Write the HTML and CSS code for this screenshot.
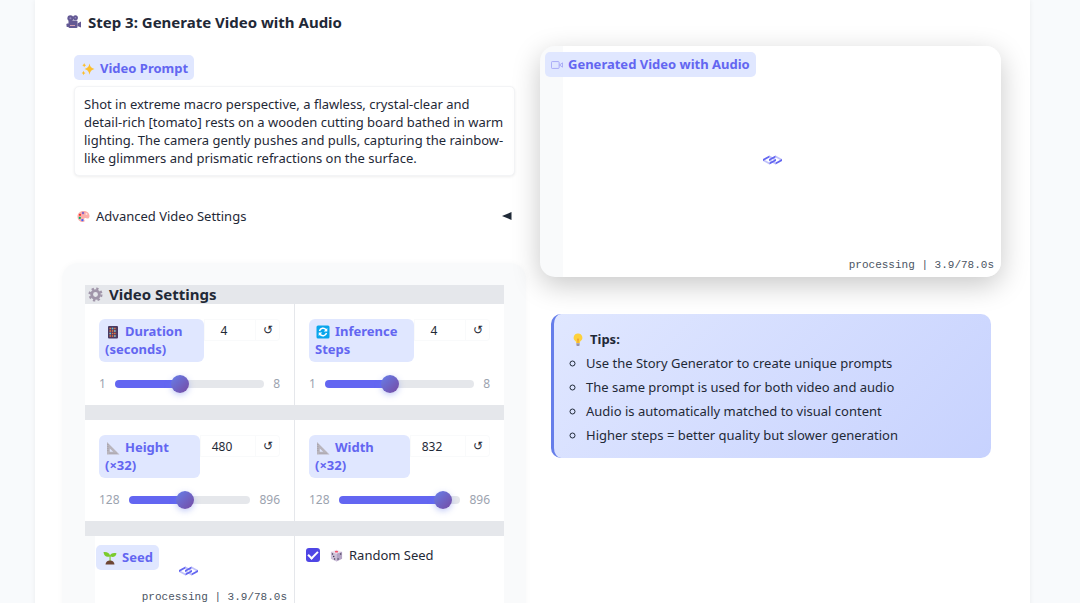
FILE: index.html
```html
<!DOCTYPE html>
<html lang="en">
<head>
<meta charset="utf-8">
<title>Generate Video with Audio</title>
<link rel="stylesheet" href="styles.css">
</head>
<body>
<svg class="defs" aria-hidden="true">
  <symbol id="loader" viewBox="0 0 750 362">
    <g id="loader-half">
      <path opacity=".4" d="M256 1L510 140V221L256 82Z"/>
      <path d="M510 140L255 280V361L510 222Z"/>
      <path opacity=".4" d="M0 140L255 280V361L0 222Z"/>
      <path d="M256 0L0 140V222L256 82Z"/>
    </g>
    <use href="#loader-half" x="240"/>
  </symbol>
  <symbol id="ruler" viewBox="0 0 14 14">
    <path fill="#b9b5bd" fill-rule="evenodd" d="M1 1L13.5 13.5H1ZM3.8 7.4V10.8H7.2Z"/>
    <path stroke="#99939e" stroke-width=".7" d="M1.4 3.5h1M1.4 5.5h1M1.4 7.5h1M1.4 9.5h1M4 12.8v-1M6 12.8v-1M8 12.8v-1M10 12.8v-1"/>
  </symbol>
</svg>
<main class="page">
  <div class="card">
    <h2 class="title">
      <svg class="icon-title" viewBox="0 0 16 14"><g fill="#635994"><circle cx="4.4" cy="3.3" r="3"/><circle cx="9.4" cy="2.8" r="2.5"/><rect x="2.5" y="5.5" width="9" height="7.5" rx="1"/><path d="M11.5 8.5L15 6.5V12.5L11.5 11Z"/><rect x="0.5" y="8.5" width="3" height="3.5" rx=".8"/></g><circle cx="4.4" cy="3.3" r="1" fill="#998ec0"/><circle cx="9.4" cy="2.8" r=".8" fill="#998ec0"/><path d="M4 10.5h5" stroke="#d3a0b2" stroke-width="1"/></svg>
      Step 3: Generate Video with Audio
    </h2>
    <div class="columns">
      <section class="left">
        <div class="prompt">
          <label class="chip" for="prompt"><svg class="icon" viewBox="0 0 14 14"><path fill="#fcbf2d" d="M8.5 1.5Q9.3 6.2 13.5 7Q9.3 7.8 8.5 12.8Q7.7 7.8 3.5 7Q7.7 6.2 8.5 1.5ZM3.2 1Q3.5 2.9 5.1 3.2Q3.5 3.5 3.2 5.4Q2.9 3.5 1.3 3.2Q2.9 2.9 3.2 1ZM2.6 8.8Q2.9 10.6 4.6 11Q2.9 11.4 2.6 13.2Q2.3 11.4.6 11Q2.3 10.6 2.6 8.8Z"/></svg>Video Prompt</label>
          <textarea id="prompt" class="prompt-text" rows="4">Shot in extreme macro perspective, a flawless, crystal-clear and detail-rich [tomato] rests on a wooden cutting board bathed in warm lighting. The camera gently pushes and pulls, capturing the rainbow-like glimmers and prismatic refractions on the surface.</textarea>
        </div>
        <button class="accordion" type="button">
          <svg class="icon-small" viewBox="0 0 14 14"><path fill="#fbaeaa" d="M7 1C3 1 .5 3.700 .5 7S3 13 6.500 13C8.500 13 8.500 11.500 7.800 10.500C7 9 8.500 8 10 8.800C12 10 13.500 8.800 13.500 6.500C13.500 3 10.500 1 7 1Z"/><circle cx="6.500" cy="3.300" r="1.300" fill="#8d65c5"/><circle cx="3.200" cy="5.200" r="1.200" fill="#f8312f"/><circle cx="3" cy="8.500" r="1.200" fill="#00b06a"/><circle cx="5.800" cy="11" r="1.200" fill="#3f5fff"/><circle cx="10.200" cy="4.300" r="1" fill="#ffe0dc"/></svg>
          <span>Advanced Video Settings</span>
          <svg class="arrow" viewBox="0 0 10 8"><path d="M0 4L9.500 0V8Z" fill="#1f2937"/></svg>
        </button>
        <div class="settings">
          <div class="grid">
            <h3 class="grid-title">
              <svg class="icon-gear" viewBox="0 0 16 16"><circle cx="8" cy="8" r="6.300" fill="none" stroke="#a095a9" stroke-width="2.400" stroke-dasharray="2.475 2.475"/><circle cx="8" cy="8" r="4.100" fill="none" stroke="#a095a9" stroke-width="3"/></svg>
              Video Settings
            </h3>
            <div class="cell">
              <div class="head">
                <label class="chip wrap" for="duration"><svg class="icon" viewBox="0 0 14 14"><rect x="2" y="1" width="10" height="12.500" rx="1" fill="#4a3a63"/><path d="M3.500 3.500h7M3.500 6h7M3.500 8.500h7M3.500 11h7" stroke="#f07b3e" stroke-width="1.500" stroke-dasharray="1.500 .8"/><path d="M5.800 3.500h1.500M8.100 6h1.500M3.500 8.500h1.500M8.100 11h1.500" stroke="#55c7e8" stroke-width="1.500"/></svg>Duration (seconds)</label>
                <input class="number" value="4" aria-label="Duration value"><button class="reset" type="button" aria-label="Reset duration">↺</button>
              </div>
              <div class="slide"><span>1</span><input id="duration" type="range" min="1" max="8" value="4" style="--fill:43%"><span>8</span></div>
            </div>
            <div class="cell">
              <div class="head">
                <label class="chip wrap" for="steps"><svg class="icon" viewBox="0 0 14 14"><rect x=".5" y=".5" width="13" height="13" rx="1.500" fill="#08a5ec"/><path d="M3.500 6A3.700 3.700 0 0 1 10 4.700M10.500 8A3.700 3.700 0 0 1 4 9.300" fill="none" stroke="#fff" stroke-width="1.500"/><path d="M11.300 3V6.600H7.700ZM2.700 11V7.400H6.300Z" fill="#fff"/></svg>Inference Steps</label>
                <input class="number" value="4" aria-label="Inference steps value"><button class="reset" type="button" aria-label="Reset steps">↺</button>
              </div>
              <div class="slide"><span>1</span><input id="steps" type="range" min="1" max="8" value="4" style="--fill:43%"><span>8</span></div>
            </div>
            <div class="cell spaced">
              <div class="head">
                <label class="chip wrap narrow" for="height"><svg class="icon"><use href="#ruler"/></svg>Height (×32)</label>
                <input class="number" value="480" aria-label="Height value"><button class="reset" type="button" aria-label="Reset height">↺</button>
              </div>
              <div class="slide"><span>128</span><input id="height" type="range" min="128" max="896" step="32" value="480" style="--fill:46%"><span>896</span></div>
            </div>
            <div class="cell spaced">
              <div class="head">
                <label class="chip wrap narrow" for="width"><svg class="icon"><use href="#ruler"/></svg>Width (×32)</label>
                <input class="number" value="832" aria-label="Width value"><button class="reset" type="button" aria-label="Reset width">↺</button>
              </div>
              <div class="slide"><span>128</span><input id="width" type="range" min="128" max="896" step="32" value="832" style="--fill:90%"><span>896</span></div>
            </div>
            <div class="cell seed spaced">
              <span class="chip"><svg class="icon" viewBox="0 0 14 14"><path fill="#7bcb2d" d="M6.500 5.500C3 6.500 .8 4.500 .5 1C4 .5 6.500 2 7 4.500C7.500 2.500 10 1.500 13.500 2.200C13 5.500 10.500 6.800 7.600 5.600L7.700 10H6.500Z"/><path fill="#6d4534" d="M2.500 13.500Q3 9.500 7 9.500T11.500 13.500Z"/></svg>Seed</span>
              <svg class="loader"><use href="#loader"/></svg>
              <span class="status">processing | 3.9/78.0s</span>
            </div>
            <div class="cell random spaced">
              <label class="check"><input type="checkbox" checked><svg class="icon-small" viewBox="0 0 14 14"><path fill="#eee5f1" d="M7 .8L13 3V10.500L7 13.500L1 10.500V3Z"/><path fill="#cdc1d8" d="M1 3L7 5.200V13.500L1 10.500Z"/><path fill="#b4a4c4" d="M13 3L7 5.200V13.500L13 10.500Z"/><ellipse cx="7" cy="2.900" rx="1.800" ry=".9" fill="#f3506a"/><g fill="#403852"><circle cx="2.700" cy="5.500" r=".8"/><circle cx="5" cy="10.700" r=".8"/><circle cx="4" cy="8" r=".8"/><circle cx="11.500" cy="5.500" r=".8"/><circle cx="8.700" cy="10.700" r=".8"/></g></svg><span>Random Seed</span></label>
            </div>
          </div>
        </div>
      </section>
      <section class="right">
        <div class="video">
          <div class="video-body">
            <svg class="loader"><use href="#loader"/></svg>
            <span class="status">processing | 3.9/78.0s</span>
          </div>
          <span class="chip video-chip"><svg class="icon" viewBox="0 0 14 14"><g fill="none" stroke="#a0a1f6" stroke-width="1"><rect x=".5" y="3" width="9" height="8" rx="1"/><path d="M10 7L13.500 4.500V9.500Z"/></g></svg>Generated Video with Audio</span>
        </div>
        <aside class="tips">
          <strong><svg class="icon" viewBox="0 0 14 14"><path fill="#fdd13c" d="M7 .5A4.200 4.200 0 0 1 9.300 8.300L8.800 10H5.200L4.700 8.300A4.200 4.200 0 0 1 7 .5Z"/><path fill="#f3a52b" d="M6 6L7 5.200L8 6L7.500 10H6.500Z"/><path fill="#9b95a5" d="M5.200 10.200H8.800L8.300 13H5.700Z"/></svg>Tips:</strong>
          <ul>
            <li>Use the Story Generator to create unique prompts</li>
            <li>The same prompt is used for both video and audio</li>
            <li>Audio is automatically matched to visual content</li>
            <li>Higher steps = better quality but slower generation</li>
          </ul>
        </aside>
      </section>
    </div>
  </div>
</main>
</body>
</html>
```
FILE: styles.css
```css
* { box-sizing: border-box; }
body {
  margin: 0;
  background: #f8fafc;
  color: #1f2937;
  font: 13px/18px "Noto Sans", "Open Sans", sans-serif;
}
input, button, textarea { font: inherit; color: inherit; margin: 0; }
h2, h3, ul { margin: 0; padding: 0; }
svg { flex: none; }
.defs { position: absolute; width: 0; height: 0; }
.page { height: 100vh; overflow: hidden; padding: 0 50px 0 35px; }
.card {
  min-height: 100%;
  padding: 12px 29px 0 27px;
  background: #fff;
  box-shadow: 0 0 5px rgba(15, 23, 42, .06);
}
.title {
  display: flex;
  align-items: center;
  gap: 6px;
  padding-left: 4px;
  font-size: 15px;
  line-height: 20px;
}
.icon-title { width: 16px; height: 14px; }
.icon-gear { width: 15px; height: 15px; }
.icon { width: 14px; height: 14px; vertical-align: -3px; margin: 0 5px 0 1px; }
.icon-small { width: 13px; height: 13px; }
.columns {
  display: grid;
  grid-template-columns: 464fr 461fr;
  gap: 14px;
  padding: 14px 0 0;
}
.left, .right { min-width: 0; }

.chip {
  display: inline-block;
  padding: 3px 6px 4px;
  border-radius: 5px;
  background: #e0e7ff;
  color: #6366f1;
  font-weight: 700;
}
.prompt { padding: 9px 11px 0 12px; }
.prompt .chip { padding-top: 4px; padding-bottom: 3px; }
.prompt-text {
  display: block;
  width: 100%;
  margin-top: 6px;
  padding: 8px 9px;
  border: 1px solid #f3f4f6;
  border-radius: 5px;
  background: #fff;
  box-shadow: 0 1px 3px rgba(0, 0, 0, .07);
  resize: none;
  overflow: hidden;
  outline: 0;
}
.accordion {
  display: flex;
  align-items: center;
  gap: 6px;
  width: 100%;
  padding: 0 14px 0 15px;
  margin: 31px 0 38px;
  border: 0;
  background: none;
}
.arrow { width: 10px; height: 8px; margin-left: auto; }

.settings {
  padding: 22px 22px 24px 23px;
  border-radius: 16px;
  background: #f9fafb;
  box-shadow: 0 0 6px rgba(0, 0, 0, .03);
}
.grid {
  display: grid;
  grid-template-columns: 1fr 1fr;
  column-gap: 1px;
  background: #e5e7eb;
}
.grid-title {
  grid-column: 1 / -1;
  display: flex;
  align-items: center;
  gap: 6px;
  padding-left: 3px;
  font-size: 15px;
  line-height: 19px;
}
.cell { min-width: 0; padding: 15px 14px 12px; background: #fff; }
.spaced { margin-top: 15px; }
.head { display: flex; align-items: flex-start; }
.wrap { flex: none; width: 105px; border-radius: 6px; }
.narrow { width: 101px; }
.number, .reset { height: 22px; padding: 0; border: 1px solid #f9fafb; background: #fff; font-size: 12px; text-align: center; }
.number { flex: 1; min-width: 0; padding-right: 12px; }
.reset { width: 24px; border-left: 0; border-radius: 0 4px 4px 0; line-height: 18px; }
.slide { display: flex; align-items: center; gap: 9px; margin-top: 13px; color: #9ca3af; font-size: 12px; }
input[type="range"] {
  flex: 1;
  min-width: 0;
  height: 18px;
  appearance: none;
  background: none;
}
input[type="range"]::-webkit-slider-runnable-track {
  height: 8px;
  border-radius: 4px;
  background: linear-gradient(to right, #6366f1 var(--fill), #e5e7eb var(--fill));
}
input[type="range"]::-webkit-slider-thumb {
  appearance: none;
  width: 18px;
  height: 18px;
  margin-top: -5px;
  border-radius: 50%;
  background: linear-gradient(135deg, #667eea, #764ba2);
  box-shadow: 0 2px 6px rgba(102, 126, 234, .4);
}
.seed {
  display: flex;
  flex-direction: column;
  align-items: flex-start;
  padding: 9px 7px 0 11px;
  background: linear-gradient(to right, #f9fafb 10px, #fff 10px);
}
.loader { width: 19px; height: 10px; fill: #6366f1; }
.seed .loader { align-self: center; margin: -4px 6px 0 0; }
.status { align-self: flex-end; color: #4b5563; font: 11px/16px "Liberation Mono", monospace; }
.seed .status { margin-top: 13px; }
.random { padding: 10px 11px; }
.check { display: flex; align-items: center; gap: 6px; }
.check .icon-small { margin-left: 4px; }
.check input {
  width: 14px;
  height: 14px;
  appearance: none;
  border-radius: 3px;
  background: #4f46e5;
  display: grid;
  place-items: center;
}
.check input:checked::after {
  content: "";
  width: 8px;
  height: 4px;
  margin-bottom: 2px;
  border: solid #fff;
  border-width: 0 0 2px 2px;
  rotate: -45deg;
}

.video {
  position: relative;
  padding-left: 23px;
  border-radius: 15px;
  background: #f9fafb;
  box-shadow: 0 8px 28px rgba(0, 0, 0, .22);
  overflow: hidden;
}
.video-body {
  display: grid;
  grid-template-rows: 1fr auto 1fr;
  min-height: 231px;
  padding: 0 7px 4px 0;
  background: #fff;
}
.video-body .loader { grid-row: 2; justify-self: center; margin-right: 12px; }
.video-body .status { grid-row: 3; justify-self: end; }
.video-chip { position: absolute; top: 6px; left: 5px; }
.video-chip .icon { width: 12px; margin-left: 0; }
.tips {
  margin: 37px 10px 0 11px;
  padding: 13px 16px 11px;
  border-left: 3px solid #667eea;
  border-radius: 10px;
  background: linear-gradient(135deg, #e0e7ff, #c7d2fe);
  line-height: 24px;
}
.tips ul { padding-left: 16px; list-style: circle; }
```
